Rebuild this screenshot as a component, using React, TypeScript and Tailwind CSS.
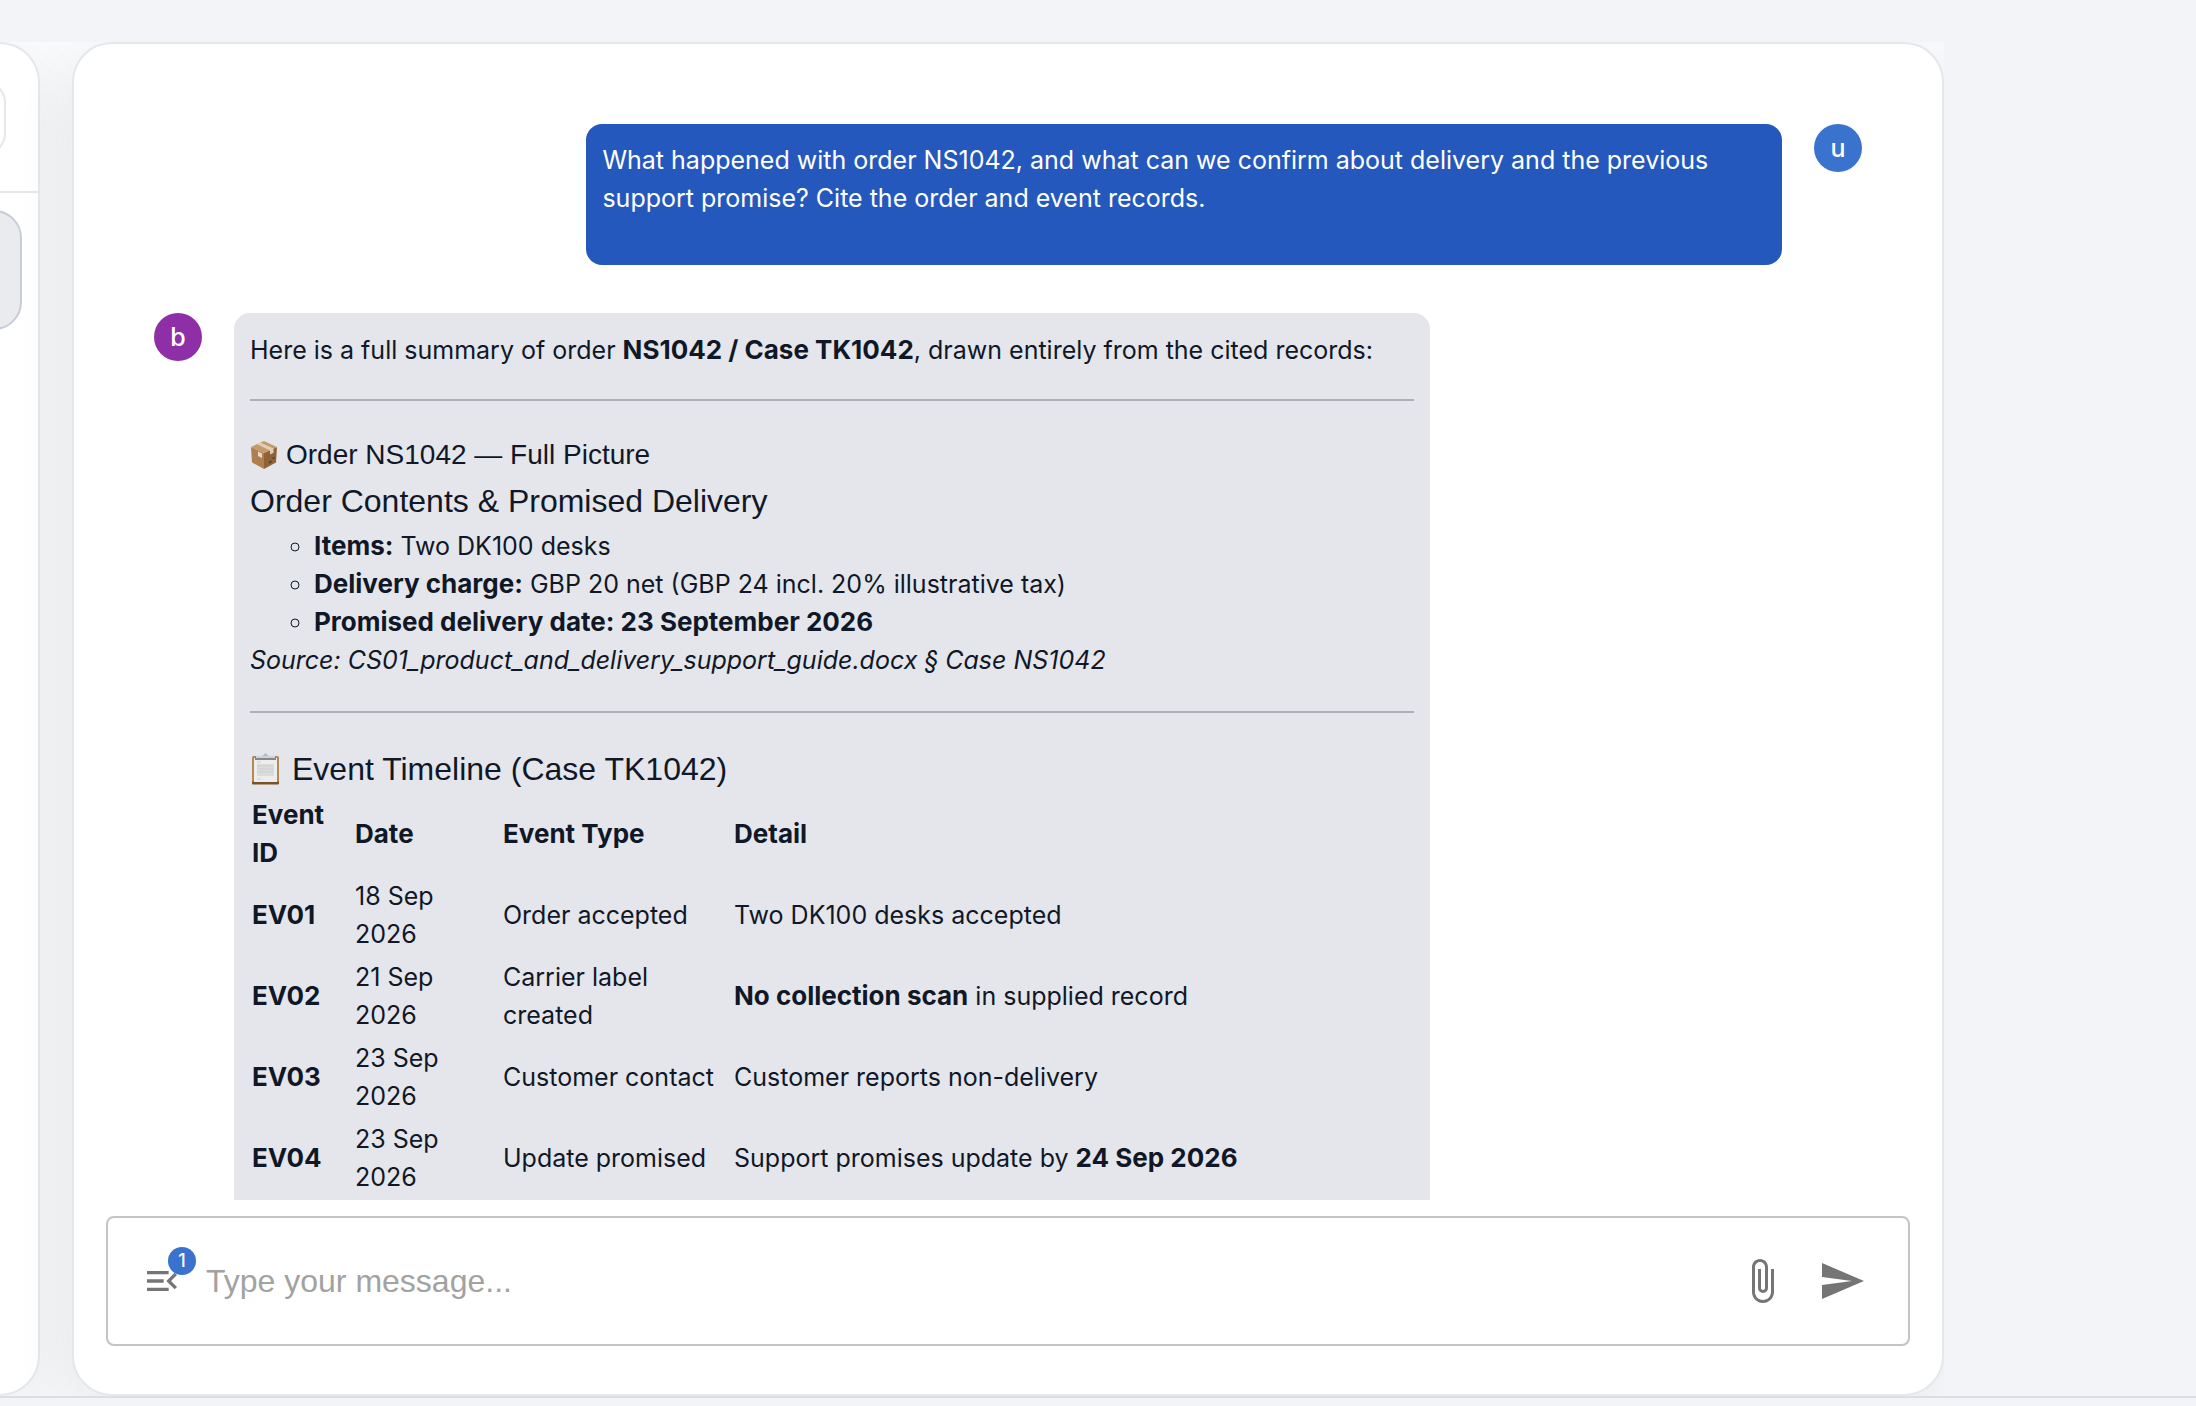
import { useState } from 'react';
import type { ReactNode } from 'react';
import { MdAttachFile, MdMenuOpen, MdSend } from 'react-icons/md';

interface TimelineEvent {
  id: string;
  date: string;
  type: string;
  detail: ReactNode;
}

const events: TimelineEvent[] = [
  { id: 'EV01', date: '18 Sep 2026', type: 'Order accepted', detail: 'Two DK100 desks accepted' },
  {
    id: 'EV02',
    date: '21 Sep 2026',
    type: 'Carrier label created',
    detail: (
      <>
        <Strong>No collection scan</Strong> in supplied record
      </>
    ),
  },
  { id: 'EV03', date: '23 Sep 2026', type: 'Customer contact', detail: 'Customer reports non-delivery' },
  {
    id: 'EV04',
    date: '23 Sep 2026',
    type: 'Update promised',
    detail: (
      <>
        Support promises update by <Strong>24 Sep 2026</Strong>
      </>
    ),
  },
];

function Strong({ children }: { children: ReactNode }) {
  return <strong className="text-[26px] leading-none">{children}</strong>;
}

function PackageIcon() {
  return (
    <svg viewBox="0 0 28 28" className="w-7 h-7 shrink-0" aria-hidden="true">
      <path d="M1 6 14 12V28L2 21.5Z" fill="#b07f4f" />
      <path d="M27 6 14 12V28L26 21.5Z" fill="#8f6238" />
      <path d="M1 6 14 0 27 6 14 12Z" fill="#c59a6b" />
      <path d="M7 3.2 20 9.4V13.5L23.5 11.8V7.6L10.5 1.6Z" fill="#e2cfb2" />
      <path d="M8 10.5 12 12.5V17L8 15Z" fill="#e6dccb" />
      <path d="M19 20.5 21.5 19.2V21.5L19 22.8ZM22.5 16.5 24.5 15.5V17.5L22.5 18.5Z" fill="#5f3f20" />
    </svg>
  );
}

function ClipboardIcon() {
  return (
    <svg viewBox="0 0 32 32" className="w-8 h-8 shrink-0" aria-hidden="true">
      <rect x="2" y="3" width="27" height="28" rx="1.5" fill="#b48a4e" />
      <rect x="2" y="28.5" width="27" height="3" rx="1" fill="#7b5228" />
      <rect x="4" y="5" width="23" height="24" fill="#ededed" />
      <rect x="7" y="11" width="17" height="12" fill="#dcdcdc" />
      <path d="M7 9H11M7 13H23M7 16H24M7 19H23M7 26H11" stroke="#cfcfcf" strokeWidth="1" />
      <path d="M5 3H26V7H5Z" fill="#85878a" />
      <path d="M6 3H25V5H6Z" fill="#cfd2d6" />
      <path d="M12 3Q12.5 2 14 2Q15.5-2 17 2Q18.5 2 19 3Z" fill="#a9bccb" />
    </svg>
  );
}

function Avatar({ letter, className }: { letter: string; className: string }) {
  return (
    <div
      className={`flex items-center justify-center w-12 h-12 shrink-0 rounded-full text-white text-[25px] font-medium ${className}`}
    >
      {letter}
    </div>
  );
}

function Sidebar() {
  return (
    <aside className="flex flex-col w-10 shrink-0 overflow-hidden bg-white border-2 border-l-0 border-gray-200 rounded-r-[40px] shadow-[0_20px_60px_rgba(17,24,39,0.08)]">
      <div className="h-[149px] pt-9 border-b-2 border-gray-200">
        <div className="w-[46px] h-[76px] -ml-10 border-2 border-gray-200 rounded-3xl" />
      </div>
      <div className="flex-1 pt-[17px]">
        <div className="w-[62px] h-[120px] -ml-10 bg-[#eaebef] border-2 border-[#c9ccd8] rounded-[28px]" />
      </div>
    </aside>
  );
}

function AssistantAnswer() {
  return (
    <div className="w-[70%] px-4 pt-[18px] pb-4 rounded-2xl bg-[#e5e6eb]">
      <p>
        Here is a full summary of order <Strong>NS1042 / Case TK1042</Strong>, drawn entirely from the cited
        records:
      </p>
      <hr className="mt-[30px] mb-8 border-t-2 border-[#aeb1ba]" />
      <h3 className="flex items-center gap-2 h-11 font-['Liberation_Sans',Arial,sans-serif] text-[28px]">
        <PackageIcon />
        Order NS1042 — Full Picture
      </h3>
      <h2 className="h-[50px] leading-[48px] font-['Liberation_Sans',Arial,sans-serif] text-[32px]">
        Order Contents &amp; Promised Delivery
      </h2>
      <ul className="pl-16 list-[circle]">
        <li>
          <Strong>Items:</Strong> Two DK100 desks
        </li>
        <li>
          <Strong>Delivery charge:</Strong> GBP 20 net (GBP 24 incl. 20% illustrative tax)
        </li>
        <li>
          <Strong>Promised delivery date: 23 September 2026</Strong>
        </li>
      </ul>
      <p className="italic">Source: CS01_product_and_delivery_support_guide.docx § Case NS1042</p>
      <hr className="my-8 border-t-2 border-[#aeb1ba]" />
      <h2 className="flex items-center gap-2.5 h-12 font-['Liberation_Sans',Arial,sans-serif] text-[32px]">
        <ClipboardIcon />
        Event Timeline (Case TK1042)
      </h2>
      <table className="w-full table-fixed text-left">
        <colgroup>
          <col className="w-[103px]" />
          <col className="w-[148px]" />
          <col className="w-[231px]" />
          <col />
        </colgroup>
        <thead>
          <tr className="h-[81px] text-[26px]">
            <th className="px-0.5">Event ID</th>
            <th className="pl-0.5 pr-12">Date</th>
            <th className="px-0.5">Event Type</th>
            <th className="px-0.5">Detail</th>
          </tr>
        </thead>
        <tbody>
          {events.map((event) => (
            <tr key={event.id} className="h-[81px]">
              <td className="px-0.5">
                <Strong>{event.id}</Strong>
              </td>
              <td className="pl-0.5 pr-12">{event.date}</td>
              <td className="px-0.5">{event.type}</td>
              <td className="px-0.5">{event.detail}</td>
            </tr>
          ))}
        </tbody>
      </table>
    </div>
  );
}

function Composer() {
  const [message, setMessage] = useState('');

  return (
    <form
      onSubmit={(e) => e.preventDefault()}
      className="flex items-center h-[130px] mx-8 mt-4 mb-12 pl-[34px] pr-[42px] border-2 border-[#c4c4c4] rounded-lg text-[#757575]"
    >
      <button type="button" aria-label="Open menu" className="relative shrink-0">
        <MdMenuOpen className="w-10 h-10" />
        <span className="absolute -top-3.5 left-[26px] flex items-center justify-center w-7 h-7 rounded-full bg-[#3973cd] text-white text-lg font-medium">
          1
        </span>
      </button>
      <input
        type="text"
        aria-label="Message"
        placeholder="Type your message..."
        value={message}
        onChange={(e) => setMessage(e.target.value)}
        className="flex-1 min-w-0 ml-6 outline-none text-gray-900 placeholder:text-[#a2a2a2] font-['Liberation_Sans',Arial,sans-serif] text-[32px]"
      />
      <button type="button" aria-label="Attach file" className="shrink-0">
        <MdAttachFile className="w-12 h-12" />
      </button>
      <button type="submit" aria-label="Send message" className="ml-8 shrink-0">
        <MdSend className="w-12 h-12" />
      </button>
    </form>
  );
}

export default function App() {
  return (
    <div className="flex flex-col h-screen overflow-hidden bg-[#f3f4f8] text-gray-900 font-['Inter',sans-serif] text-[25px] leading-[38px]">
      <div className="flex-1 min-h-0 pt-[42px] pr-[252px]">
        <div className="flex gap-8 h-full overflow-hidden bg-gray-50">
          <Sidebar />
          <main className="flex flex-col flex-1 min-w-0 bg-white border-2 border-gray-200 rounded-[40px] shadow-[0_20px_60px_rgba(17,24,39,0.08)]">
            <div className="flex flex-col flex-1 gap-12 min-h-0 overflow-hidden px-20 pt-20">
              <div className="flex justify-end items-start gap-8">
                <div className="w-[70%] px-4 pt-[17px] pb-12 rounded-2xl bg-[#2558bd] text-white">
                  <p>
                    What happened with order NS1042, and what can we confirm about delivery and the previous
                    support promise? Cite the order and event records.
                  </p>
                </div>
                <Avatar letter="u" className="bg-[#3973cd]" />
              </div>
              <div className="flex items-start gap-8">
                <Avatar letter="b" className="bg-[#8f2fa8]" />
                <AssistantAnswer />
              </div>
            </div>
            <Composer />
          </main>
        </div>
      </div>
      <footer className="h-2.5 border-t-2 border-[#dcdee6]" />
    </div>
  );
}
